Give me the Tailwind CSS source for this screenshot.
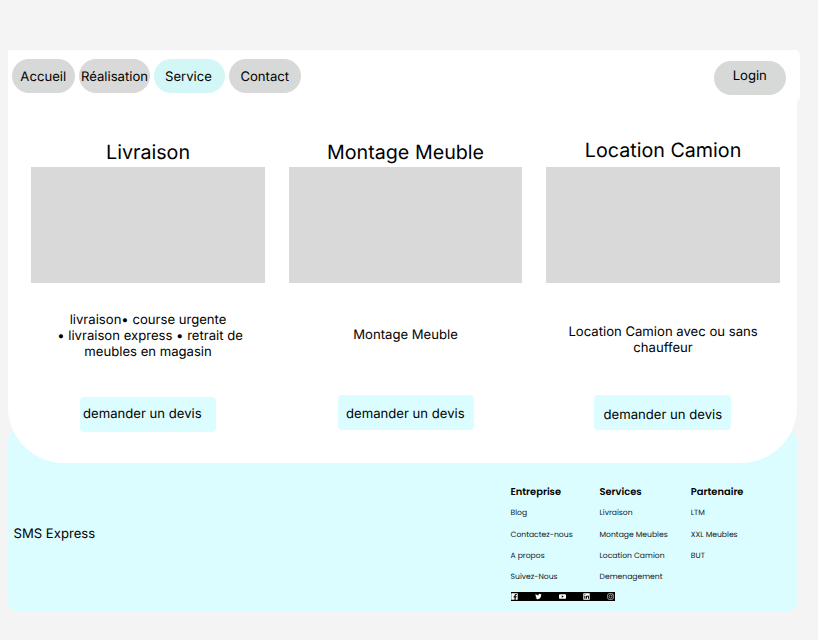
<!DOCTYPE html>
<html lang="fr">
<head>
<meta charset="utf-8">
<title>SMS Express</title>
<script src="https://cdn.jsdelivr.net/npm/@tailwindcss/browser@4"></script>
</head>
<body class="h-[640px] overflow-hidden bg-[#f4f4f4] pt-[50px] pl-2 font-['Inter',sans-serif] text-[13.12px] leading-4 text-black [text-rendering:geometricPrecision]">
<main class="relative z-10 h-[413px] w-[788.5px] rounded-b-[56px] bg-white">
  <header class="flex h-[52px] w-[792px] items-start justify-between rounded-r-[6px] bg-white pt-[8.5px] pl-[3.5px]">
    <nav class="flex whitespace-nowrap">
      <a class="mr-1 flex h-[34px] w-[63.5px] items-center justify-center rounded-full bg-[#d7d9d9] pt-[2px]">Accueil</a>
      <a class="mr-1 flex h-[34px] w-[71px] items-center justify-center rounded-full bg-[#d9d9d9] pt-[2px]">Réalisation</a>
      <a class="mr-1 flex h-[34px] w-[71px] items-center justify-center rounded-full bg-[#d3f7f7] pt-[2px] pr-[2px]">Service</a>
      <a class="flex h-[34px] w-[71.5px] items-center justify-center rounded-full bg-[#d7d9d9] pt-[2px]">Contact</a>
    </nav>
    <a class="mt-[2px] mr-[14.5px] flex h-[34px] w-[71.5px] items-center justify-center rounded-full bg-[#d7d9d9] pb-[2.5px]">Login</a>
  </header>
  <section class="grid grid-cols-[233.5px_233.5px_233.5px] gap-x-6 pt-[36px] pl-[23.3px]">
    <article class="flex flex-col">
      <h2 class="h-[29px] pt-px text-center text-[19.7px] leading-[26px]">Livraison</h2>
      <div class="h-[116px] bg-[#d9d9d9]"></div>
      <p class="h-[113.5px] pt-[29px] text-center whitespace-nowrap">livraison• course urgente<br><span class="pl-[4px]">• livraison express • retrait de</span><br>meubles en magasin</p>
      <a class="ml-[48.7px] h-[35px] w-[136px] rounded-[4px] bg-[#dbfdff] pt-[9px] pl-[3px] whitespace-nowrap">demander un devis</a>
    </article>
    <article class="flex flex-col">
      <h2 class="h-[29px] pt-px text-center text-[19.7px] leading-[26px]">Montage Meuble</h2>
      <div class="h-[116px] bg-[#d9d9d9]"></div>
      <p class="h-[111.5px] pt-[44px] text-center">Montage Meuble</p>
      <a class="ml-[49.2px] h-[35px] w-[136px] rounded-[4px] bg-[#dbfdff] pt-[11px] pl-2 whitespace-nowrap">demander un devis</a>
    </article>
    <article class="flex flex-col">
      <h2 class="h-[29px] text-center text-[19.7px] leading-[24px]">Location Camion</h2>
      <div class="h-[116px] bg-[#d9d9d9]"></div>
      <p class="h-[111.5px] pt-[41px] text-center">Location Camion avec ou sans<br>chauffeur</p>
      <a class="ml-[47.7px] h-[35px] w-[137px] rounded-[4px] bg-[#dbfdff] pt-[12px] pl-[9.5px] whitespace-nowrap">demander un devis</a>
    </article>
  </section>
</main>
<footer class="-mt-[33px] flex h-[181.5px] w-[788.5px] justify-between rounded-[10px] bg-[#dbfdff]">
  <p class="pt-[96px] pl-[5.5px]">SMS Express</p>
  <div class="w-[286px] pt-[56.5px] font-['Poppins','Inter',sans-serif] text-[7.65px] leading-3 whitespace-nowrap text-[#12202b]">
    <div class="grid grid-cols-[89px_91.3px_auto]">
      <ul class="flex flex-col gap-[9.2px]">
        <li class="text-[9.9px] font-semibold text-black">Entreprise</li><li class="-mt-[0.5px] mb-[0.5px]">Blog</li><li>Contactez-nous</li><li>A propos</li><li>Suivez-Nous</li>
      </ul>
      <ul class="flex flex-col gap-[9.2px]">
        <li class="text-[9.9px] font-semibold text-black">Services</li><li class="-mt-[0.5px] mb-[0.5px]">Livraison</li><li>Montage Meubles</li><li>Location Camion</li><li>Demenagement</li>
      </ul>
      <ul class="flex flex-col gap-[9.2px]">
        <li class="text-[9.9px] font-semibold text-black">Partenaire</li><li class="-mt-[0.5px] mb-[0.5px]">LTM</li><li>XXL Meubles</li><li>BUT</li>
      </ul>
    </div>
    <div class="mt-[8.5px] flex h-[9.5px] w-[104.5px] items-center justify-between bg-black pr-[0.8px] pl-[0.8px] text-white">
      <svg class="size-[7px]" viewBox="0 0 24 24" fill="currentColor"><path d="M2 1h20a1 1 0 0 1 1 1v20a1 1 0 0 1-1 1h-6v-8h3l.6-4H16V9c0-1 .5-2 2-2h2V3.500h-3c-4 0-5 2.500-5 5V11H9v4h3v8H2a1 1 0 0 1-1-1V2a1 1 0 0 1 1-1z"/></svg>
      <svg class="size-[7px]" viewBox="0 0 24 24" fill="currentColor"><path d="M23 5c-.8.400-1.700.6-2.600.7.900-.6 1.600-1.400 2-2.500-.9.500-1.800.9-2.900 1.100A4.600 4.600 0 0 0 11.700 8.500C8 8.300 4.600 6.500 2.300 3.700c-1.200 2.100-.6 4.800 1.400 6.100-.7 0-1.400-.2-2-.6 0 2.200 1.500 4.100 3.600 4.600-.6.200-1.300.2-2 .1.600 1.800 2.300 3.100 4.200 3.200A9.200 9.200 0 0 1 1 19c8.900 5.600 20 0 20-11.700.8-.6 1.500-1.400 2-2.300z"/></svg>
      <svg class="size-[7px]" viewBox="0 0 24 24" fill="currentColor"><path fill-rule="evenodd" d="M4 4h16q4 0 4 4v8q0 4-4 4H4q-4 0-4-4V8q0-4 4-4zm5.500 4v8l7-4z"/></svg>
      <svg class="size-[7px]" viewBox="0 0 24 24" fill="currentColor"><path fill-rule="evenodd" d="M2 1h20l1 1v20l-1 1H2l-1-1V2zm2.500 8v11H8V9zm0-5v3H8V4zM10 9v11h3.500v-6c0-3 3.500-3 3.500 0v6h3.500v-7c0-5-5-5.500-7-2.500V9z"/></svg>
      <svg class="size-[7px]" viewBox="0 0 24 24" fill="none" stroke="currentColor" stroke-width="2"><rect x="2" y="2" width="20" height="20" rx="6"/><circle cx="12" cy="12" r="5"/><circle cx="17.500" cy="6.500" r="0.600"/></svg>
    </div>
  </div>
</footer>
</body>
</html>
